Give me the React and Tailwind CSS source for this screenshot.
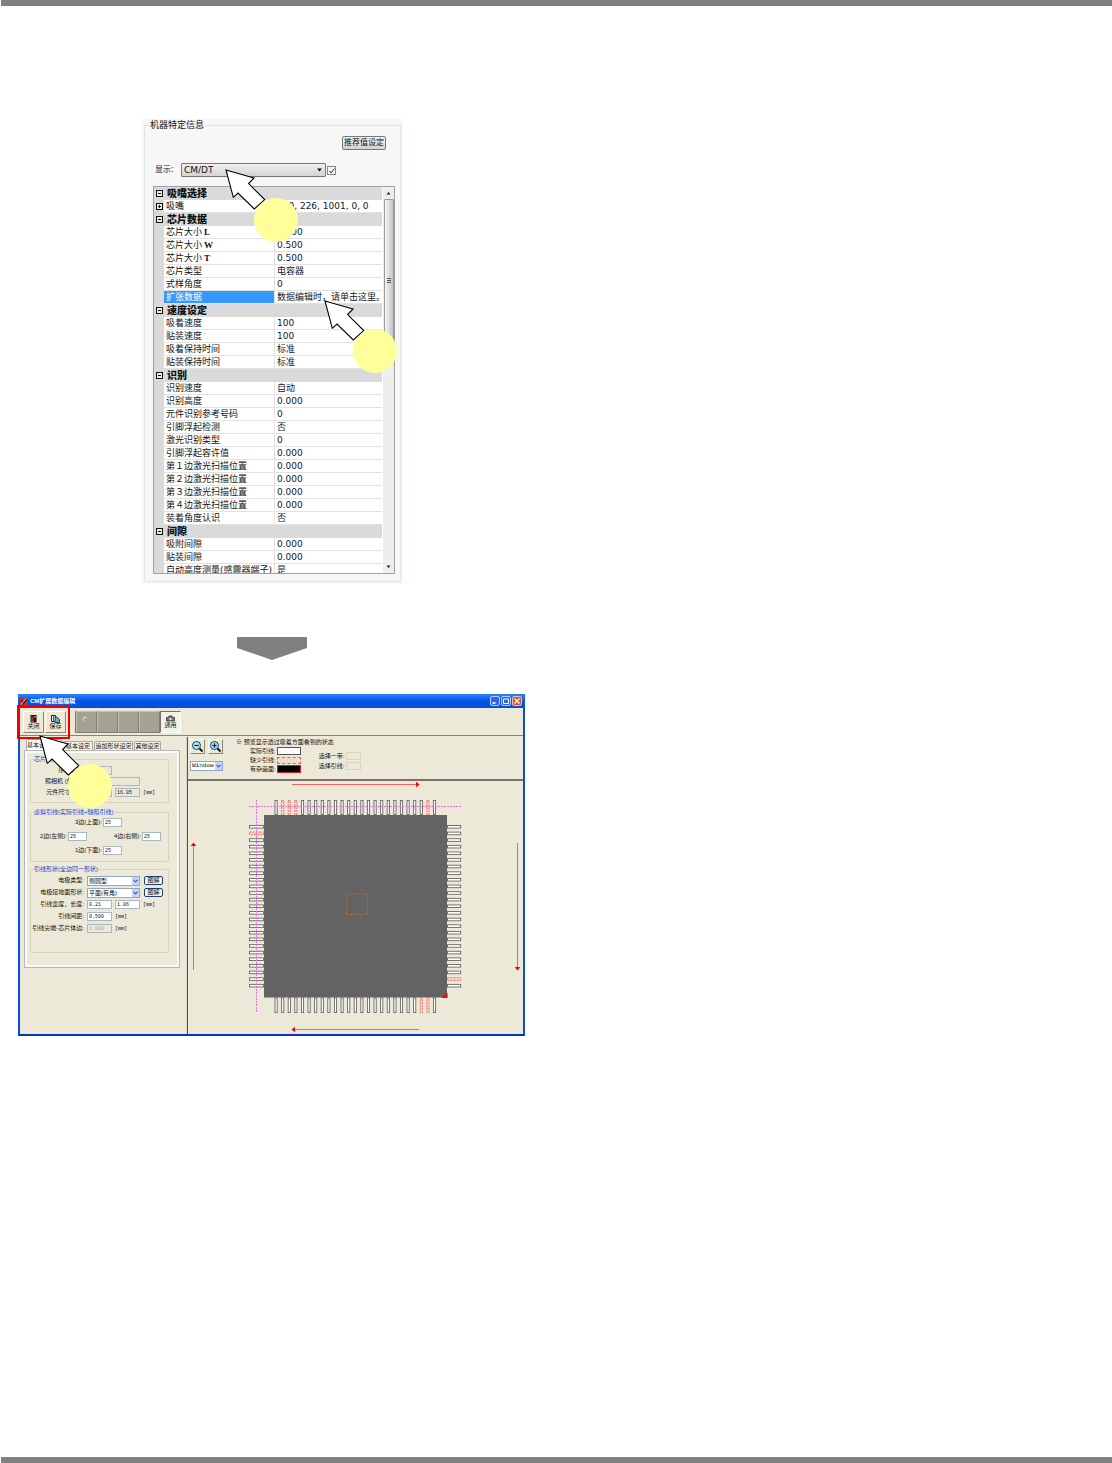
import React from 'react';

const machineRows = [
    { group: '吸嘴选择' },
    { name: '吸嘴', value: '110, 226, 1001, 0, 0', expandable: true },
    { group: '芯片数据' },
    { name: '芯片大小', axis: 'L', value: '1.000' },
    { name: '芯片大小', axis: 'W', value: '0.500' },
    { name: '芯片大小', axis: 'T', value: '0.500' },
    { name: '芯片类型', value: '电容器' },
    { name: '式样角度', value: '0' },
    { name: '扩张数据', value: '数据编辑时，请单击这里。', selected: true },
    { group: '速度设定' },
    { name: '吸着速度', value: '100' },
    { name: '贴装速度', value: '100' },
    { name: '吸着保持时间', value: '标准' },
    { name: '贴装保持时间', value: '标准' },
    { group: '识别' },
    { name: '识别速度', value: '自动' },
    { name: '识别高度', value: '0.000' },
    { name: '元件识别参考号码', value: '0' },
    { name: '引脚浮起检测', value: '否' },
    { name: '激光识别类型', value: '0' },
    { name: '引脚浮起容许值', value: '0.000' },
    { name: '第１边激光扫描位置', value: '0.000' },
    { name: '第２边激光扫描位置', value: '0.000' },
    { name: '第３边激光扫描位置', value: '0.000' },
    { name: '第４边激光扫描位置', value: '0.000' },
    { name: '装着角度认识', value: '否' },
    { group: '间隙' },
    { name: '吸附间隙', value: '0.000' },
    { name: '贴装间隙', value: '0.000' },
    { name: '自动高度测量(感震器端子)', value: '是' },
];

const pins = Array.from({ length: 25 }, (_, i) => i);

const Callout = ({ className }) => (
    <svg className={`absolute pointer-events-none ${className}`} width="75" height="75" viewBox="-1 -1 75 75" aria-hidden="true">
        <path d="M0 0L28 8L22.6 13.6L38.7 29.6L28.3 39L12 23L7.3 27.3Z" fill="#fff" stroke="#000" strokeWidth="1.1" />
        <circle cx="50" cy="50" r="22" fill="#ffff99" />
    </svg>
);

const TreeIcon = ({ plus }) => (
    <svg width="7" height="7" viewBox="0 0 7 7" className="mx-auto block">
        <rect x="0.5" y="0.5" width="6" height="6" fill="#eee" stroke="#111" />
        <path d={plus ? 'M2 3.5H5M3.5 2V5' : 'M2 3.5H5'} stroke="#111" />
    </svg>
);

const MachineInfo = () => (
    <section className="relative ml-0.5 w-[261px] bg-[#f7f7f7] px-0.5 pb-0.5 font-['DejaVu_Sans','Noto_Sans_CJK_SC',sans-serif] text-[9px] text-[#111]">
        <fieldset className="border border-[#dde8e6] pb-[7px]">
            <legend className="ml-1 px-px text-[9px] leading-[13px]">机器特定信息</legend>
            <div className="flex justify-end pt-1 pr-[14px]">
                <button type="button" className="h-[14px] rounded-[2px] border border-[#777] bg-linear-to-b from-[#f4f4f4] to-[#d2d2d2] px-px text-[8px] leading-[12px] whitespace-nowrap">
                    推荐值设定
                </button>
            </div>
            <div className="mt-[13px] flex items-center pl-[10px]">
                <label htmlFor="display" className="w-[26px] text-[8px] leading-[14px]">显示:</label>
                <div className="relative">
                    <select id="display" className="block h-[14px] w-[145px] appearance-none rounded-[1px] border border-[#777] bg-linear-to-b from-[#f2f2f2] to-[#d4d4d4] pl-0.5 text-[9px] leading-[12px]">
                        <option>CM/DT</option>
                    </select>
                    <svg className="pointer-events-none absolute top-[5px] right-[4px]" width="5" height="4" viewBox="0 0 5 4"><path d="M0 0.5H5L2.5 3.5Z" fill="#111" /></svg>
                </div>
                <span className="relative ml-px">
                    <input type="checkbox" aria-label="显示" defaultChecked className="block h-[9px] w-[9px] appearance-none border border-[#888] bg-[#f5f5f5]" />
                    <svg className="pointer-events-none absolute top-[2px] left-[2px]" width="6" height="6" viewBox="0 0 6 6"><path d="M0.5 3L2 5L5.5 0.5" fill="none" stroke="#333" /></svg>
                </span>
            </div>
            <div className="mt-[9px] mr-[5px] ml-2 flex h-[388px] overflow-hidden border border-[#a0a0a0] bg-white">
                <div className="min-w-0 flex-1">
                    <table className="w-full table-fixed border-separate border-spacing-0">
                        <colgroup>
                            <col className="w-[10px]" />
                            <col className="w-[111px]" />
                            <col />
                        </colgroup>
                        <tbody>
                            {machineRows.map((row, i) =>
                                row.group ? (
                                    <tr key={i} className="h-[13px] bg-[#dadada]">
                                        <td className="p-0"><TreeIcon /></td>
                                        <th colSpan="2" className="p-0 pl-[3px] text-left text-[10px] leading-[13px] font-black">{row.group}</th>
                                    </tr>
                                ) : (
                                    <tr key={i} className="h-[13px]">
                                        <td className="bg-[#dadada] p-0">{row.expandable && <TreeIcon plus />}</td>
                                        <th
                                            className={
                                                'overflow-hidden border-r border-b border-[#e2e2e2] p-0 pl-0.5 text-left leading-[12px] font-normal whitespace-nowrap ' +
                                                (row.selected ? 'bg-[#3399ff] text-white' : '')
                                            }
                                        >
                                            {row.name}
                                            {row.axis && <span className="ml-0.5 font-['Liberation_Serif',serif] font-bold">{row.axis}</span>}
                                        </th>
                                        <td className="border-b border-[#e2e2e2] p-0 pl-0.5 leading-[12px] whitespace-nowrap text-[#101830]">{row.value}</td>
                                    </tr>
                                )
                            )}
                        </tbody>
                    </table>
                </div>
                <div className="ml-px flex w-[11px] flex-col items-center bg-[#eeeeee]">
                    <svg width="5" height="12" viewBox="0 0 5 12"><path d="M0.5 7.5H4.5L2.5 5Z" fill="#222" /></svg>
                    <div className="flex h-[163px] w-[10px] flex-col items-center justify-center gap-px rounded-[1px] border border-[#999] bg-linear-to-r from-[#f5f5f5] to-[#c4c4c8]">
                        <i className="h-px w-1 bg-[#555]" />
                        <i className="h-px w-1 bg-[#555]" />
                        <i className="h-px w-1 bg-[#555]" />
                    </div>
                    <svg className="mt-auto" width="5" height="12" viewBox="0 0 5 12"><path d="M0.5 4.5H4.5L2.5 7Z" fill="#222" /></svg>
                </div>
            </div>
        </fieldset>
        <Callout className="top-[50px] left-[83px]" />
        <Callout className="top-[181px] left-[182px]" />
    </section>
);

const Field = ({ label, value, disabled, className = 'w-[25px]' }) => (
    <input
        type="text"
        aria-label={label}
        defaultValue={value}
        disabled={disabled}
        className={
            "block h-[9px] border border-[#a5b8c4] pl-px font-['Liberation_Mono',monospace] text-[5px] leading-[7px] " +
            (disabled ? 'bg-[#ece9d8] ' : 'bg-white ') + className
        }
    />
);

const SmallSelect = ({ label, value, className }) => (
    <div className={'relative ' + className}>
        <select aria-label={label} className="block h-[10px] w-full appearance-none border border-[#8fa8c4] bg-white pl-px text-[6px] leading-[8px]">
            <option>{value}</option>
        </select>
        <span className="pointer-events-none absolute top-px right-px flex h-2 w-[7px] items-center justify-center bg-[#c2d3fc]">
            <svg width="5" height="4" viewBox="0 0 5 4"><path d="M0.5 0.8L2.5 2.8L4.5 0.8" fill="none" stroke="#3b5590" strokeWidth="1.1" /></svg>
        </span>
    </div>
);

const Group = ({ title, className, children }) => (
    <fieldset className={'min-w-0 rounded-[2px] border border-[#d5d2bf] ' + className}>
        <legend className="ml-[3px] text-[6px] leading-[8px] text-[#0a46d2]">{title}</legend>
        {children}
    </fieldset>
);

// label column ends at the same x for every row
const Row = ({ label, children }) => (
    <div className="flex h-[9px] items-center gap-[3px]">
        <label className="flex items-center gap-[3px] whitespace-nowrap">
            <span className="flex w-[53px] justify-end">{label}</span>
            {children[0]}
        </label>
        {children.slice(1)}
    </div>
);

const Side = ({ label }) => (
    <label className="flex items-center gap-px whitespace-nowrap">
        {label}
        <Field label={label} value="25" className="w-[19px]" />
    </label>
);

const Unit = () => <span className="font-['Liberation_Mono',monospace] text-[5px] leading-[8px]">[mm]</span>;

const DiagramButton = () => (
    <button type="button" className="ml-px h-[9px] w-[19px] rounded-[2px] border border-[#1c3f77] bg-[#f4f3ee] text-[6px] leading-[7px]">图解</button>
);

const SettingsPanel = () => (
    <div className="w-[167px] shrink-0 border-r border-[#d8d5c4] pt-[2px] pl-1">
        <div role="tablist" className="flex h-[11px] items-end gap-px pl-0.5">
            <button type="button" role="tab" aria-selected="true" className="h-[11px] w-[36px] rounded-t-[2px] border border-b-0 border-[#b4b4a8] border-t-[#f0a030] bg-[#fbfbf8] text-left text-[6px] leading-[9px]">基本设定</button>
            <button type="button" role="tab" className="h-[9px] w-[30px] rounded-t-[2px] border border-b-0 border-[#a8a89c] bg-[#f4f3ea] text-[6px] leading-[8px] whitespace-nowrap">基本设定</button>
            <button type="button" role="tab" className="h-[9px] w-[39px] rounded-t-[2px] border border-b-0 border-[#a8a89c] bg-[#f4f3ea] text-[6px] leading-[8px] whitespace-nowrap">追加形状设定</button>
            <button type="button" role="tab" className="h-[9px] w-[27px] rounded-t-[2px] border border-b-0 border-[#a8a89c] bg-[#f4f3ea] text-[6px] leading-[8px] whitespace-nowrap">其他设定</button>
        </div>
        <div className="mr-[6px] border border-[#b5b5b8] bg-[#fafafa] p-0.5">
            <div className="bg-[#ece9d8] pt-0.5 pr-[8px] pb-3 pl-[3px]">
                <Group title="芯片信息" className="h-[48px]">
                    <div className="flex flex-col gap-0.5 pt-[3px]">
                        <Row label="序列编号:">
                            {[<Field key="a" label="序列编号" disabled />]}
                        </Row>
                        <Row label="照相机 (倍率) :">
                            {[<Field key="a" label="照相机" disabled className="w-[53px]" />]}
                        </Row>
                        <Row label="元件尺寸(XY):">
                            {[<Field key="a" label="元件尺寸" value="16.05" disabled />, <Field key="b" label="元件尺寸 Y" value="16.05" disabled />, <Unit key="u" />]}
                        </Row>
                    </div>
                </Group>
                <Group title="虚拟引线(实际引线+缺陷引线)" className="mt-[5px] h-[54px]">
                    <div className="flex flex-col gap-[5px] pt-0.5">
                        <div className="flex h-[9px] justify-end pr-[46px]"><Side label="3边(上面):" /></div>
                        <div className="flex h-[9px] justify-between pr-[7px] pl-[9px]">
                            <Side label="2边(左侧):" />
                            <Side label="4边(右侧):" />
                        </div>
                        <div className="flex h-[9px] justify-end pr-[46px]"><Side label="1边(下面):" /></div>
                    </div>
                </Group>
                <Group title="引线形状(全边同一形状)" className="mt-[3px] h-[88px]">
                    <div className="flex flex-col gap-[3px] pt-[3px]">
                        <Row label="电极类型:">
                            {[<SmallSelect key="a" label="电极类型" value="侧圆型" className="w-[53px]" />, <DiagramButton key="b" />]}
                        </Row>
                        <Row label="电极接地面形状:">
                            {[<SmallSelect key="a" label="电极接地面形状" value="平面(有角)" className="w-[53px]" />, <DiagramButton key="b" />]}
                        </Row>
                        <Row label="引线宽度，长度:">
                            {[<Field key="a" label="引线宽度" value="0.21" />, <Field key="b" label="引线长度" value="1.06" />, <Unit key="u" />]}
                        </Row>
                        <Row label="引线间距:">
                            {[<Field key="a" label="引线间距" value="0.500" />, <Unit key="u" />]}
                        </Row>
                        <Row label="引线尖端-芯片体边:">
                            {[<Field key="a" label="引线尖端-芯片体边" value="1.000" disabled className="w-[25px] text-[#b0ad9e]" />, <Unit key="u" />]}
                        </Row>
                    </div>
                </Group>
            </div>
        </div>
    </div>
);

const ZoomButton = ({ plus }) => (
    <button type="button" aria-label={plus ? '放大' : '缩小'} className="flex h-[15px] w-[15px] items-center justify-center border border-t-white border-r-[#8a887c] border-b-[#8a887c] border-l-white">
        <svg width="13" height="13" viewBox="0 0 13 13">
            <path d="M8 8L11.5 11.5" stroke="#111" strokeWidth="2" />
            <circle cx="5.5" cy="5.5" r="4" fill="#a8ecfa" stroke="#1a4050" strokeWidth="1" />
            <path d={plus ? 'M3.3 5.5H7.7M5.5 3.3V7.7' : 'M3.3 5.5H7.7'} stroke="#06069a" strokeWidth="1.2" />
        </svg>
    </button>
);

const pinStroke = (red) => (red ? { stroke: '#f06058', fill: '#f6ddd0', strokeDasharray: '2 1' } : { stroke: '#666', fill: '#fff' });

const ChipDrawing = () => (
    <svg viewBox="188 781 335 253" className="block w-full">
        {pins.map((i) => (
            <g key={i} strokeWidth="0.9">
                <rect x={275 + i * 6.6} y="800.5" width="2.2" height="14" {...pinStroke([1, 2, 3, 23].includes(i))} />
                <rect x={275 + i * 6.6} y="998" width="2.2" height="14.5" {...pinStroke([22, 23].includes(i))} />
                <rect x="249.5" y={825.5 + i * 6.62} width="14" height="2.6" {...pinStroke(i === 1)} />
                <rect x="447.5" y={825.5 + i * 6.62} width="13.2" height="2.6" {...pinStroke(i === 23)} />
            </g>
        ))}
        <rect x="264" y="815" width="183" height="182.5" fill="#636363" />
        <path d="M447.5 992.5V998H441.5Z" fill="#f00" />
        <rect x="346.5" y="894" width="21" height="20.5" fill="none" stroke="#b07030" strokeWidth="0.9" strokeDasharray="2 1" />
        <path d="M249 806.5H461M256.5 800V1012" fill="none" stroke="#f060e8" strokeWidth="0.9" strokeDasharray="2 1" />
        <path d="M292 784.5H417M419 1029.5H294M193.5 970V845M517.5 843V968" fill="none" stroke="#f4645c" strokeWidth="1" />
        <path d="M419.5 784.5L416 781.7V787.3ZM291.5 1029.5L295 1026.7V1032.3ZM193.5 842.5L190.7 846H196.3ZM517.5 970.5L514.7 967H520.3Z" fill="#f00" />
    </svg>
);

const Preview = () => (
    <div className="flex min-w-0 flex-1 flex-col border-l border-[#55534a]">
        <div className="flex h-[42px] pt-[2px] pl-0.5">
            <div className="w-[33px]">
                <div className="flex justify-between">
                    <ZoomButton />
                    <ZoomButton plus />
                </div>
                <div className="mt-[7px] font-['Liberation_Mono',monospace]">
                    <SmallSelect label="Window" value="Window" className="w-[33px]" />
                </div>
            </div>
            <div className="ml-[13px]">
                <p className="leading-[7px] whitespace-nowrap">※ 预览显示透过吸着方面看到的状态</p>
                <div className="flex">
                    <ul className="flex flex-col gap-px pt-px pl-[14px] leading-[8px]">
                        <li className="flex items-center gap-px">实际引线:<i className="h-[8px] w-[24px] border border-[#555] bg-white" /></li>
                        <li className="flex items-center gap-px">缺少引线:<i className="h-[7px] w-[24px] border border-dashed border-[#f06058] bg-[#f0ddd0]" /></li>
                        <li className="flex items-center gap-px">有杂画面:<i className="h-[8px] w-[24px] border border-[#d02020] bg-black" /></li>
                    </ul>
                    <ul className="flex flex-col gap-0.5 pt-1.5 pl-[18px] leading-[8px]">
                        <li className="flex items-center gap-[2px]">选择一带:<i className="h-[8px] w-[15px] border border-[#d8d5c4]" /></li>
                        <li className="flex items-center gap-[2px]">选择引线:<i className="h-[8px] w-[15px] border border-[#d8d5c4]" /></li>
                    </ul>
                </div>
            </div>
        </div>
        <div className="flex-1 border-t-2 border-[#77756a]">
            <ChipDrawing />
        </div>
    </div>
);

const toolButton = 'flex h-[22px] w-[21px] flex-col items-center justify-center border border-t-white border-r-[#8a887c] border-b-[#8a887c] border-l-white text-[6px] leading-[7px]';

const EditorWindow = () => (
    <section className="relative w-full max-w-[507px] border-x-2 border-b-2 border-x-[#0a4ce0] border-b-[#0a34b8] bg-[#ece9d8] font-['Liberation_Sans','Noto_Sans_CJK_SC',sans-serif] text-[6px] text-[#111]">
        <header className="-mx-0.5 flex h-[14px] items-center rounded-t-[2px] bg-linear-to-b from-[#2a86fa] via-[#0455e6] to-[#0450d8] pr-[3px] pl-0.5 text-white">
            <svg width="8" height="9" viewBox="0 0 8 9"><rect width="8" height="9" fill="#d02838" /><path d="M1.5 3L3.5 6.5L7 1.5" fill="none" stroke="#222" strokeWidth="1.4" /><path d="M1 7.5L6.5 1" stroke="#fff" strokeWidth="0.7" /></svg>
            <h1 className="ml-0.5 font-bold">CM扩展数据编辑</h1>
            <div className="ml-auto flex gap-px">
                <button type="button" aria-label="最小化" className="rounded-[2px] border border-[#b8ccf8] bg-[#2f66e4]">
                    <svg className="block" width="8" height="8" viewBox="0 0 8 8"><path d="M1.5 6H4.5" stroke="#fff" strokeWidth="1.6" /></svg>
                </button>
                <button type="button" aria-label="最大化" className="rounded-[2px] border border-[#b8ccf8] bg-[#2f66e4]">
                    <svg className="block" width="8" height="8" viewBox="0 0 8 8"><path d="M1.5 2H6.5V6.5H1.5Z" fill="none" stroke="#fff" /></svg>
                </button>
                <button type="button" aria-label="关闭窗口" className="rounded-[2px] border border-[#f0c0b0] bg-[#e0502c]">
                    <svg className="block" width="8" height="8" viewBox="0 0 8 8"><path d="M1.5 1.5L6.5 6.5M6.5 1.5L1.5 6.5" stroke="#fff" strokeWidth="1.3" /></svg>
                </button>
            </div>
        </header>
        <div className="flex h-[28px] items-start border-b border-[#85837a] pt-[3px] pl-[3px]">
            <button type="button" className={toolButton}>
                <svg width="7" height="8" viewBox="0 0 7 8"><rect width="6" height="7.5" x="0.5" fill="#111" /><path d="M1 1.5L3.5 0.5V5.5L1 7Z" fill="#b01020" /><rect x="1" y="3" width="3" height="4" fill="#c01828" /><rect x="4" y="1" width="2" height="2" fill="#20a050" /></svg>
                关闭
            </button>
            <button type="button" className={toolButton + ' ml-px'}>
                <svg width="9" height="8" viewBox="0 0 9 8"><path d="M0.5 0.5H4.5V6.5H0.5Z" fill="#fff" stroke="#222" /><path d="M4 2H6L8.5 4.5V7.5H4Z" fill="#40c0d8" stroke="#123" strokeWidth="0.8" /><path d="M2.5 1V6" stroke="#555" /></svg>
                保存
            </button>
            <div className="ml-[9px] flex border-l border-[#77756a]">
                {[0, 1, 2, 3].map((i) => (
                    <button key={i} type="button" aria-label={`页 ${i + 1}`} className="h-[22px] w-[21px] border border-t-[#c4c1b2] border-r-[#807e74] border-b-[#807e74] border-l-[#c4c1b2] bg-[#a5a293]">
                        {i === 0 && <svg width="19" height="20" viewBox="0 0 19 20"><path d="M6.5 9V5.5H10" fill="none" stroke="#dddacb" /></svg>}
                    </button>
                ))}
                <button type="button" className="flex h-[22px] w-[21px] flex-col items-center justify-center border border-t-[#77756a] border-r-white border-b-white border-l-[#77756a] bg-[#f3f1e6] leading-[7px]">
                    <svg width="9" height="7" viewBox="0 0 9 7"><path d="M0.5 2.5H2L3 1H6L7 2.5H8.5V6H0.5Z" fill="#777" stroke="#333" strokeWidth="0.8" /><circle cx="4.5" cy="4" r="1.2" fill="#ddd" /></svg>
                    通用
                </button>
            </div>
        </div>
        <div className="flex pt-px">
            <SettingsPanel />
            <Preview />
        </div>
        <div className="pointer-events-none absolute top-[11px] -left-[3px] h-[34px] w-[53px] border-2 border-[#f00000]" />
        <Callout className="top-[41px] left-[19px]" />
    </section>
);

const App = () => {
    return (
        <div className="flex min-h-screen flex-col bg-white">
            <div className="ml-px h-[6px] bg-[#808080]" />
            <main className="ml-[18px] flex w-full max-w-[507px] flex-col items-center pt-[113px] pb-10">
                <MachineInfo />
                <svg className="mt-[53px]" width="70" height="23" viewBox="0 0 70 23"><path d="M0 0H70V11L35 23L0 11Z" fill="#808080" /></svg>
                <div className="mt-[34px] w-full">
                    <EditorWindow />
                </div>
            </main>
            <div className="mt-auto ml-px h-[6px] bg-[#808080]" />
        </div>
    );
};

export default App;
